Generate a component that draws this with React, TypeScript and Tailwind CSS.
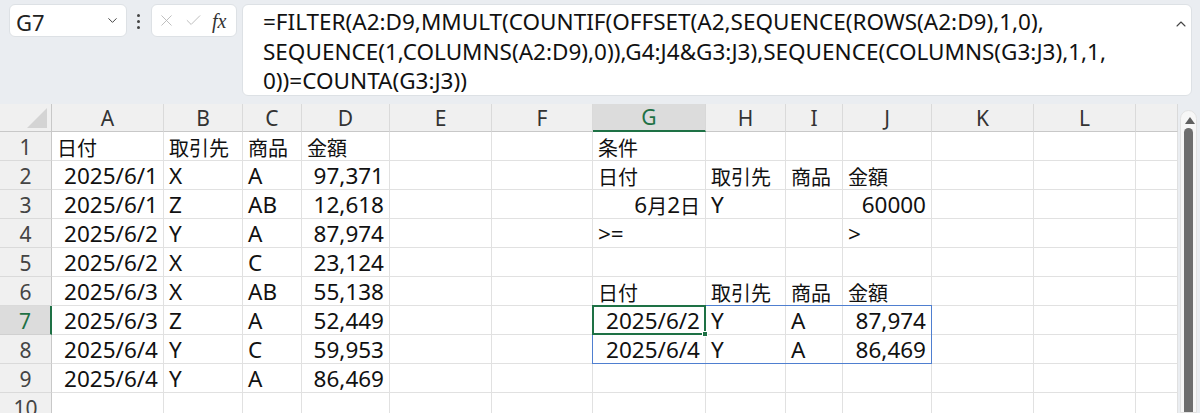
import { ChevronDown, ChevronUp, X, Check } from 'lucide-react';

// column widths in px (row header first)
const colWidths = [52, 112, 79, 59, 88, 102, 101, 113, 80, 57, 89, 102, 102, 42];
const colNames = ['', 'A', 'B', 'C', 'D', 'E', 'F', 'G', 'H', 'I', 'J', 'K', 'L', ''];
const rowHeight = 29;

type Cell = { v: string; right?: boolean };

// sheet contents keyed by row -> column index (1 = A)
const sheet: Record<number, Record<number, Cell>> = {
    1: { 1: { v: '日付' }, 2: { v: '取引先' }, 3: { v: '商品' }, 4: { v: '金額' }, 7: { v: '条件' } },
    2: { 1: { v: '2025/6/1', right: true }, 2: { v: 'X' }, 3: { v: 'A' }, 4: { v: '97,371', right: true }, 7: { v: '日付' }, 8: { v: '取引先' }, 9: { v: '商品' }, 10: { v: '金額' } },
    3: { 1: { v: '2025/6/1', right: true }, 2: { v: 'Z' }, 3: { v: 'AB' }, 4: { v: '12,618', right: true }, 7: { v: '6月2日', right: true }, 8: { v: 'Y' }, 10: { v: '60000', right: true } },
    4: { 1: { v: '2025/6/2', right: true }, 2: { v: 'Y' }, 3: { v: 'A' }, 4: { v: '87,974', right: true }, 7: { v: '>=' }, 10: { v: '>' } },
    5: { 1: { v: '2025/6/2', right: true }, 2: { v: 'X' }, 3: { v: 'C' }, 4: { v: '23,124', right: true } },
    6: { 1: { v: '2025/6/3', right: true }, 2: { v: 'X' }, 3: { v: 'AB' }, 4: { v: '55,138', right: true }, 7: { v: '日付' }, 8: { v: '取引先' }, 9: { v: '商品' }, 10: { v: '金額' } },
    7: { 1: { v: '2025/6/3', right: true }, 2: { v: 'Z' }, 3: { v: 'A' }, 4: { v: '52,449', right: true }, 7: { v: '2025/6/2', right: true }, 8: { v: 'Y' }, 9: { v: 'A' }, 10: { v: '87,974', right: true } },
    8: { 1: { v: '2025/6/4', right: true }, 2: { v: 'Y' }, 3: { v: 'C' }, 4: { v: '59,953', right: true }, 7: { v: '2025/6/4', right: true }, 8: { v: 'Y' }, 9: { v: 'A' }, 10: { v: '86,469', right: true } },
    9: { 1: { v: '2025/6/4', right: true }, 2: { v: 'Y' }, 3: { v: 'A' }, 4: { v: '86,469', right: true } },
    10: {},
};

const font = { fontFamily: '"Noto Sans", "Noto Sans CJK JP", sans-serif' };

const colLeft = (i: number) => colWidths.slice(0, i).reduce((a, b) => a + b, 0);

// latin glyphs are set larger than the kanji, like the original sheet font
const CellText = ({ text }: { text: string }) => {
    const runs = text.match(/[\u3000-\u9fff]+|[^\u3000-\u9fff]+/g) || [];
    return (
        <>
            {runs.map((r, i) =>
                /[\u3000-\u9fff]/.test(r) ? (
                    <span key={i} className="text-[20px]" style={{ fontFamily: '"Noto Sans CJK JP", sans-serif' }}>
                        {r}
                    </span>
                ) : (
                    <span key={i} className="text-[22.5px]">
                        {r}
                    </span>
                )
            )}
        </>
    );
};

const FormulaBar = () => (
    <div className="relative h-[104px] bg-[#eaedf1]">
        {/* name box */}
        <div className="absolute left-[9px] top-[4px] flex h-[33px] w-[118px] items-center justify-between rounded-md border border-[#dde1e5] bg-white pl-[6px] pr-[6px]">
            <span className="pt-[2px] text-[22px] leading-none text-[#222]">G7</span>
            <ChevronDown size={15} strokeWidth={1.6} className="text-[#444]" />
        </div>
        {/* dots */}
        <div className="absolute left-[137px] top-[14px] flex flex-col gap-[3px]">
            <span className="h-[3px] w-[3px] rounded-full bg-[#444]" />
            <span className="h-[3px] w-[3px] rounded-full bg-[#444]" />
            <span className="h-[3px] w-[3px] rounded-full bg-[#444]" />
        </div>
        {/* cancel / enter / fx */}
        <div className="absolute left-[151px] top-[4px] flex h-[33px] w-[86px] items-center rounded-md border border-[#dde1e5] bg-white pl-[5px]">
            <X size={19} strokeWidth={1.1} className="text-[#b5b5b5]" />
            <Check size={19} strokeWidth={1.1} className="ml-[8px] text-[#b5b5b5]" />
            <span className="ml-[9px] text-[20px] italic leading-none text-[#333]" style={{ fontFamily: '"Liberation Serif", serif' }}>
                fx
            </span>
        </div>
        {/* formula */}
        <div className="absolute left-[242px] top-[4px] h-[92px] w-[950px] rounded-md border border-[#dde1e5] bg-white pl-[20px] pt-[2px]">
            <div className="text-[22.5px] leading-[29.5px] text-[#111]">
                <div>=FILTER(A2:D9,MMULT(COUNTIF(OFFSET(A2,SEQUENCE(ROWS(A2:D9),1,0),</div>
                <div>SEQUENCE(1,COLUMNS(A2:D9),0)),G4:J4&amp;G3:J3),SEQUENCE(COLUMNS(G3:J3),1,1,</div>
                <div>0))=COUNTA(G3:J3))</div>
            </div>
            <ChevronUp size={16} strokeWidth={1.6} className="absolute right-[2px] top-[11px] text-[#444]" />
        </div>
    </div>
);

const HeaderRow = () => (
    <div className="flex h-[28px]">
        {colWidths.map((w, i) => {
            if (i === 0) {
                return (
                    <div key={i} className="relative shrink-0 border-b border-r border-[#c8c8c8] bg-[#f0f0f0]" style={{ width: w }}>
                        <div
                            className="absolute bottom-[3px] right-[4px] h-[20px] w-[20px] bg-[#d4d4d4]"
                            style={{ clipPath: 'polygon(100% 0, 100% 100%, 0 100%)' }}
                        />
                    </div>
                );
            }
            const selected = colNames[i] === 'G';
            return (
                <div
                    key={i}
                    className={
                        selected
                            ? 'flex shrink-0 items-center justify-center border-b-2 border-r border-b-[#1e7145] border-r-[#d8d8d8] bg-[#dcdcdc] pt-[2px] text-[21px] text-[#1e7145]'
                            : 'flex shrink-0 items-center justify-center border-b border-r border-b-[#c8c8c8] border-r-[#dadada] bg-[#f0f0f0] pt-[2px] text-[21px] text-[#333]'
                    }
                    style={{ width: w }}
                >
                    {colNames[i]}
                </div>
            );
        })}
    </div>
);

const SheetRow = ({ row }: { row: number }) => {
    const cells = sheet[row] || {};
    const active = row === 7;
    return (
        <div className="flex" style={{ height: rowHeight }}>
            {colWidths.map((w, i) => {
                if (i === 0) {
                    return (
                        <div
                            key={i}
                            className={
                                active
                                    ? 'flex shrink-0 items-center justify-center border-b border-r-2 border-b-[#d0d0d0] border-r-[#1e7145] bg-[#dcdcdc] pt-[3px] text-[21px] text-[#1e7145]'
                                    : 'flex shrink-0 items-center justify-center border-b border-r border-b-[#dadada] border-r-[#c8c8c8] bg-[#f0f0f0] pt-[3px] text-[21px] text-[#444]'
                            }
                            style={{ width: w }}
                        >
                            {row}
                        </div>
                    );
                }
                const cell = cells[i];
                return (
                    <div
                        key={i}
                        className={
                            'flex shrink-0 items-center overflow-visible whitespace-nowrap border-b border-r border-[#e1e1e1] bg-white px-[5px] pt-[3px] leading-none text-[#111] ' +
                            (cell?.right ? 'justify-end' : 'justify-start')
                        }
                        style={{ width: w }}
                    >
                        {cell && <CellText text={cell.v} />}
                    </div>
                );
            })}
        </div>
    );
};

const Scrollbar = () => (
    <div className="absolute bottom-0 right-0 top-[6px] w-[22px] bg-[#eaedf1]">
        <div className="absolute bottom-0 left-[2px] right-[3px] top-0 rounded-t-full border border-[#e2e2e2] bg-[#f7f7f7]">
            <div
                className="absolute left-[4px] top-[6px] h-[7px] w-[10px] bg-[#606060]"
                style={{ clipPath: 'polygon(50% 0, 100% 100%, 0 100%)' }}
            />
            <div className="absolute bottom-0 left-[3px] right-[3px] top-[17px] rounded-t-full bg-[#6e6e6e]" />
        </div>
    </div>
);

export default function App() {
    const g = colLeft(7);
    const selTop = 28 + rowHeight * 6;
    return (
        <div className="h-[413px] w-[1200px] overflow-hidden bg-[#eaedf1]" style={font}>
            <FormulaBar />
            <div className="relative h-[309px] overflow-hidden">
                <div className="flex flex-col">
                    <HeaderRow />
                    {[1, 2, 3, 4, 5, 6, 7, 8, 9, 10].map((r) => (
                        <SheetRow key={r} row={r} />
                    ))}
                </div>
                {/* spill range G7:J8 */}
                <div
                    className="pointer-events-none absolute border border-[#4f7fd0]"
                    style={{ left: g - 1, top: selTop - 1, width: colWidths[7] + colWidths[8] + colWidths[9] + colWidths[10] + 1, height: rowHeight * 2 + 1 }}
                />
                {/* active cell G7 */}
                <div
                    className="pointer-events-none absolute border-2 border-[#1e7145]"
                    style={{ left: g - 1, top: selTop - 1, width: colWidths[7] + 1, height: rowHeight + 1 }}
                >
                    <div className="absolute bottom-[-4px] right-[-4px] h-[6px] w-[6px] border border-white bg-[#1e7145]" />
                </div>
                <Scrollbar />
            </div>
        </div>
    );
}
